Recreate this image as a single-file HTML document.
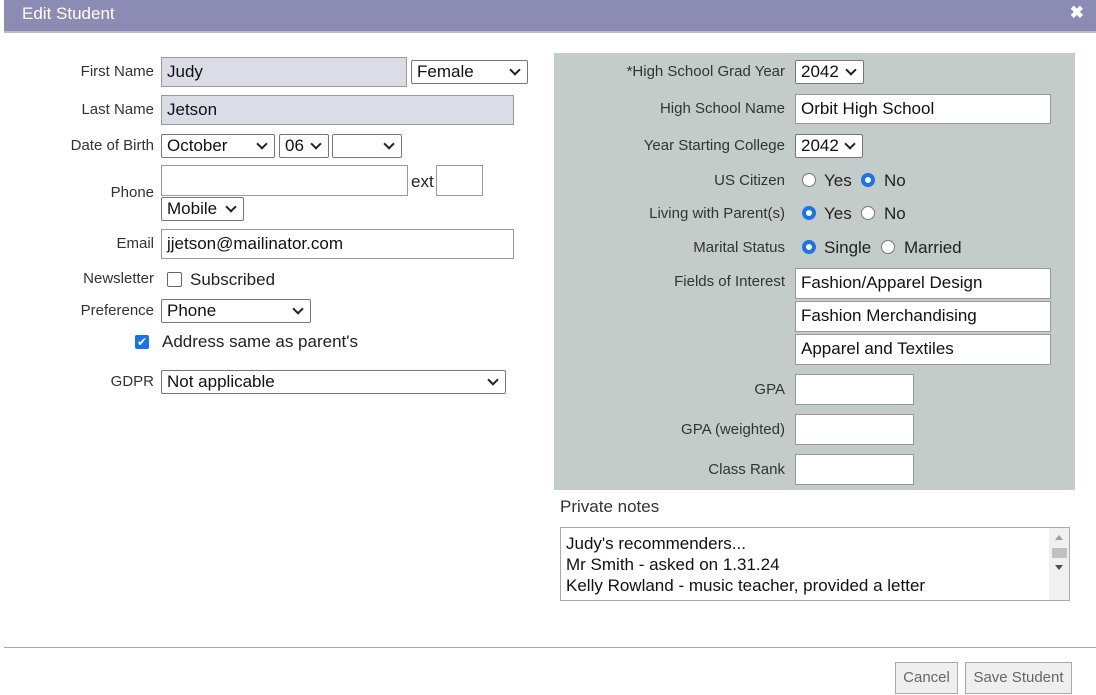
<!DOCTYPE html>
<html><head><style>
body{margin:0;width:1096px;height:695px;background:#fff;font-family:"Liberation Sans",sans-serif;position:relative;overflow:hidden;color:#222}
.a{position:absolute}
.hd{left:4px;top:0;width:1092px;height:31px;background:#8b8bb3;border-bottom:2px solid #b9b9c9}
.hd span{position:absolute;left:18px;top:4px;color:#fff;font-size:17px}
.x{right:12px;top:3px;color:#fff;font-size:17px;font-weight:bold}
.l{font-size:15px;color:#333;white-space:nowrap;text-align:right;line-height:18px}
.in{box-sizing:border-box;border:1px solid #999;background:#fff;font-size:17px;line-height:28px;padding-left:5px;color:#111}
.g{background:#dcdce6}
.s{box-sizing:border-box;border:1px solid #777;border-radius:2px;background:#fff;font-size:17px;line-height:21px;padding-left:5px;color:#111}
.s:after{content:"";position:absolute;right:8px;top:5px;width:6px;height:6px;border-right:2px solid #222;border-bottom:2px solid #222;transform:rotate(45deg)}
.t{font-size:17px;color:#222;line-height:20px}
.r{box-sizing:border-box;width:14px;height:14px;border-radius:50%;border:1px solid #777;background:#fff}
.rc{border:4px solid #1a73e8;background:#fff}
.btn{box-sizing:border-box;border:1px solid #aaa;background:#efefef;font-size:15px;color:#666;text-align:center;line-height:29px}
</style></head><body>
<div class="a hd"><span>Edit Student</span></div>
<div class="a x">✖</div>

<div class="a l" style="right:942px;top:63px">First Name</div>
<div class="a in g" style="left:161px;top:57px;width:246px;height:30px">Judy</div>
<div class="a s" style="left:411px;top:60px;width:117px;height:24px">Female</div>
<div class="a l" style="right:942px;top:101px">Last Name</div>
<div class="a in g" style="left:161px;top:95px;width:353px;height:30px">Jetson</div>
<div class="a l" style="right:942px;top:137px">Date of Birth</div>
<div class="a s" style="left:161px;top:134px;width:114px;height:24px">October</div>
<div class="a s" style="left:279px;top:134px;width:50px;height:24px">06</div>
<div class="a s" style="left:332px;top:134px;width:70px;height:24px"></div>
<div class="a l" style="right:942px;top:184px">Phone</div>
<div class="a in" style="left:161px;top:165px;width:247px;height:31px"></div>
<div class="a t" style="left:411px;top:172px">ext</div>
<div class="a in" style="left:436px;top:165px;width:47px;height:31px"></div>
<div class="a s" style="left:161px;top:197px;width:83px;height:24px;padding-right:20px">Mobile</div>
<div class="a l" style="right:942px;top:235px">Email</div>
<div class="a in" style="left:161px;top:229px;width:353px;height:30px">jjetson@mailinator.com</div>
<div class="a l" style="right:942px;top:270px">Newsletter</div>
<div class="a" style="left:167px;top:272px;width:13px;height:13px;border:1px solid #666;border-radius:2px;background:#fff"></div>
<div class="a t" style="left:190px;top:270px">Subscribed</div>
<div class="a l" style="right:942px;top:302px">Preference</div>
<div class="a s" style="left:161px;top:299px;width:150px;height:24px">Phone</div>
<div class="a" style="left:135px;top:335px;width:14px;height:14px;background:#1a73e8;border-radius:2px;color:#fff;font-size:12px;line-height:14px;text-align:center">✔</div>
<div class="a t" style="left:162px;top:332px">Address same as parent's</div>
<div class="a l" style="right:942px;top:373px">GDPR</div>
<div class="a s" style="left:161px;top:370px;width:345px;height:24px">Not applicable</div>

<div class="a" style="left:554px;top:53px;width:521px;height:437px;background:#c4ccca"></div>
<div class="a l" style="right:311px;top:63px">*High School Grad Year</div>
<div class="a s" style="left:795px;top:60px;width:69px;height:24px">2042</div>
<div class="a l" style="right:311px;top:100px">High School Name</div>
<div class="a in" style="left:795px;top:94px;width:256px;height:30px">Orbit High School</div>
<div class="a l" style="right:311px;top:137px">Year Starting College</div>
<div class="a s" style="left:795px;top:134px;width:68px;height:24px">2042</div>
<div class="a l" style="right:311px;top:172px">US Citizen</div>
<div class="a r" style="left:802px;top:173px"></div><div class="a t" style="left:824px;top:171px">Yes</div>
<div class="a r rc" style="left:861px;top:173px"></div><div class="a t" style="left:884px;top:171px">No</div>
<div class="a l" style="right:311px;top:205px">Living with Parent(s)</div>
<div class="a r rc" style="left:802px;top:206px"></div><div class="a t" style="left:824px;top:204px">Yes</div>
<div class="a r" style="left:861px;top:206px"></div><div class="a t" style="left:884px;top:204px">No</div>
<div class="a l" style="right:311px;top:239px">Marital Status</div>
<div class="a r rc" style="left:802px;top:240px"></div><div class="a t" style="left:824px;top:238px">Single</div>
<div class="a r" style="left:881px;top:240px"></div><div class="a t" style="left:904px;top:238px">Married</div>
<div class="a l" style="right:311px;top:273px">Fields of Interest</div>
<div class="a in" style="left:795px;top:268px;width:256px;height:31px">Fashion/Apparel Design</div>
<div class="a in" style="left:795px;top:301px;width:256px;height:31px">Fashion Merchandising</div>
<div class="a in" style="left:795px;top:334px;width:256px;height:31px">Apparel and Textiles</div>
<div class="a l" style="right:311px;top:381px">GPA</div>
<div class="a in" style="left:795px;top:374px;width:119px;height:31px"></div>
<div class="a l" style="right:311px;top:421px">GPA (weighted)</div>
<div class="a in" style="left:795px;top:414px;width:119px;height:31px"></div>
<div class="a l" style="right:311px;top:461px">Class Rank</div>
<div class="a in" style="left:795px;top:454px;width:119px;height:31px"></div>

<div class="a t" style="left:560px;top:497px;color:#333">Private notes</div>
<div class="a" style="left:560px;top:527px;width:510px;height:74px;border:1px solid #aaa;box-sizing:border-box;overflow:hidden">
<div style="padding:5px 0 0 5px;font-size:17px;line-height:21px;color:#111">Judy's recommenders...<br>Mr Smith - asked on 1.31.24<br>Kelly Rowland - music teacher, provided a letter<br>Dr Brown - asked</div>
<div class="a" style="right:0;top:0;width:20px;height:72px;background:#f0f0f0"><div class="a" style="left:3px;top:20px;width:15px;height:10px;background:#c1c1c1"></div><div class="a" style="left:6px;top:7px;border:4px solid transparent;border-bottom:5px solid #a0a0a0;border-top:0"></div><div class="a" style="left:6px;top:37px;border:4px solid transparent;border-top:5px solid #505050;border-bottom:0"></div></div>
</div>
<div class="a" style="left:4px;top:647px;width:1092px;height:1px;background:#aaa"></div>
<div class="a btn" style="left:895px;top:662px;width:63px;height:32px">Cancel</div>
<div class="a btn" style="left:965px;top:662px;width:107px;height:32px">Save Student</div>
</body></html>
